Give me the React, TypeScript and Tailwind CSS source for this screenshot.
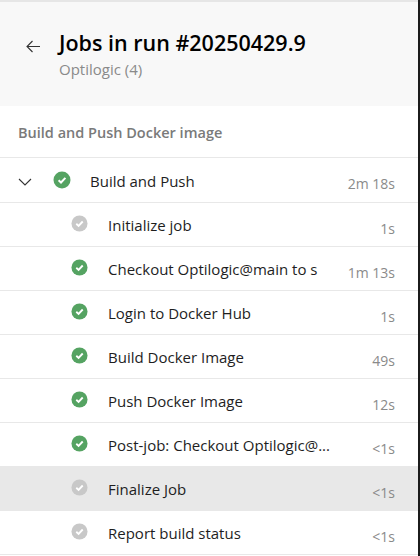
import React from "react";

function Check({ green, className }: { green: boolean; className: string }) {
  return (
    <svg viewBox="0 0 18 18" className={className} aria-hidden="true">
      <circle cx="9" cy="9" r="8.5" fill={green ? "#55a362" : "#c8c8c8"} />
      <path d="M5.6 9.3 L8 11.5 L12.4 6.9" fill="none" stroke="#fff" strokeWidth="2" />
    </svg>
  );
}

const steps: { name: string; time: string; green: boolean; active?: boolean }[] = [
  { name: "Initialize job", time: "1s", green: false },
  { name: "Checkout Optilogic@main to s", time: "1m 13s", green: true },
  { name: "Login to Docker Hub", time: "1s", green: true },
  { name: "Build Docker Image", time: "49s", green: true },
  { name: "Push Docker Image", time: "12s", green: true },
  { name: "Post-job: Checkout Optilogic@...", time: "<1s", green: true },
  { name: "Finalize Job", time: "<1s", green: false, active: true },
  { name: "Report build status", time: "<1s", green: false },
];

export default function App() {
  return (
    <div className="h-[556px] w-[420px] overflow-hidden bg-white font-['Open_Sans','Noto_Sans',sans-serif]">
      <div className="flex h-full w-[418px] flex-col">
        <div className="h-[106px] border-t-2 border-[#e6e6e6] bg-[#f8f8f8] pl-[26px] pt-[27px]">
          <div className="flex items-start">
            <svg viewBox="0 0 14 14" className="mt-[10px] h-[14px] w-[14px] shrink-0" fill="none" stroke="#333" strokeWidth="1.1" aria-hidden="true">
              <path d="M14 7.5H1M6.5 2 1 7.5 6.5 13" />
            </svg>
            <div className="ml-[19px]">
              <div className="text-[21.5px] font-semibold leading-[28px] text-black">Jobs in run #20250429.9</div>
              <div className="mt-[3px] text-[15px] leading-[18px] text-[#8a8a8a]">Optilogic (4)</div>
            </div>
          </div>
        </div>
        <div className="flex h-[52px] items-start border-b border-[#e8e8e8] pl-[18px] pt-[17px] text-[14.5px] font-semibold leading-[20px] text-[#7a7a7a]">
          Build and Push Docker image
        </div>
        <div className="flex h-[45px] items-start border-b border-[#e8e8e8] pl-[18px] pr-[23px]">
          <svg viewBox="0 0 14 8" className="mt-[20px] h-2 w-[14px] shrink-0" fill="none" stroke="#333" strokeWidth="1.1" aria-hidden="true">
            <path d="M1 1l6 6 6-6" />
          </svg>
          <Check green className="ml-[21px] mt-[13px] h-[18px] w-[18px] shrink-0" />
          <div className="ml-[19px] flex-1 pt-[13px] text-[15px] leading-[20px] text-[#1e1e1e]">Build and Push</div>
          <div className="pt-[16px] text-sm leading-[20px] text-[#8a8a8a]">2m 18s</div>
        </div>
        {steps.map((s) => (
          <div
            key={s.name}
            className={`flex h-[44px] shrink-0 items-start pl-[71px] pr-[23px] ${
              s.active ? "bg-[#e8e8e8]" : "border-b border-[#e8e8e8]"
            }`}
          >
            <Check green={s.green} className="mt-[12px] h-[17px] w-[17px] shrink-0" />
            <div className="ml-[20px] w-[228px] shrink-0 overflow-hidden whitespace-nowrap pt-[12px] text-[15px] leading-[20px] text-[#1e1e1e]">{s.name}</div>
            <div className="flex-1 whitespace-nowrap pt-[16px] text-right text-sm leading-[20px] text-[#8a8a8a]">{s.time}</div>
          </div>
        ))}
      </div>
      <div className="fixed right-0 top-0 h-[556px] w-[2px] bg-[#1b1b1b]" />
    </div>
  );
}
